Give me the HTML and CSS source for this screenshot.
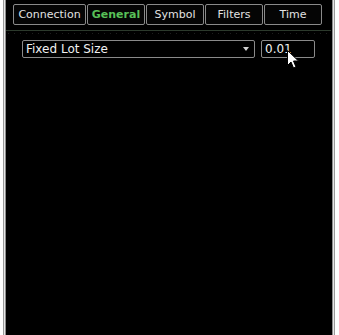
FILE: index.html
```html
<!DOCTYPE html>
<html lang="en">
<head>
    <meta charset="UTF-8">
    <title>Settings</title>
    <link rel="stylesheet" href="styles.css">
</head>
<body>
    <div class="frame">
        <div class="panel">
            <div class="tabs">
                <div class="tab tab-wide">Connection</div>
                <div class="tab active">General</div>
                <div class="tab">Symbol</div>
                <div class="tab">Filters</div>
                <div class="tab">Time</div>
            </div>
            <div class="rule"></div>
            <div class="dots"></div>

            <div class="row">
                <div class="select">
                    <span>Fixed Lot Size</span>
                    <span class="arrow"></span>
                </div>
                <div class="field">
                    <span>0.01</span>
                    <!-- mouse pointer -->
                    <svg class="cursor" width="13" height="20" viewBox="0 0 13 20">
                        <path d="M0.5 0.5 L0.5 15.5 L4 12 L6.5 18 L9 17 L6.5 11 L11.5 11 Z" fill="#fff" stroke="#000" stroke-width="1"/>
                    </svg>
                </div>
            </div>
        </div>
    </div>
</body>
</html>
```

FILE: styles.css
```css
html, body {
    margin: 0;
    height: 100%;
    background: #fff;
}

body {
    font-family: "DejaVu Sans", Verdana, sans-serif;
    font-size: 11px;
    overflow: hidden;
}

.frame {
    height: 100%;
    margin: 0 4px 0 3px;
    border-left: 1px solid #9a9a9a;
    border-right: 1px solid #9a9a9a;
    padding: 0 1px;
    background: #e6e6e6;
}

.panel {
    height: 100%;
    background: #000;
    border-left: 1px solid #8c8c8c;
    border-right: 1px solid #8c8c8c;
    padding-top: 4px;
    box-sizing: border-box;
}

.tabs {
    display: flex;
    padding-left: 7px;
}

.tab {
    width: 58px;
    height: 21px;
    box-sizing: border-box;
    border: 1px solid #8a8a8a;
    border-radius: 2px;
    color: #e2e2e2;
    display: flex;
    align-items: center;
    justify-content: center;
    margin-right: 1px;
    background: #050505;
}

.tab-wide {
    width: 73px;
}

.tab.active {
    color: #58c058;
    font-weight: bold;
}

.rule {
    height: 1px;
    background: #2c3a2c;
    margin: 5px 1px 0 0;
}

.dots {
    height: 1px;
    margin: 2px 2px 0 2px;
    background: repeating-linear-gradient(90deg, #1e1e1e 0 1px, transparent 1px 6px);
}

.row {
    display: flex;
    gap: 6px;
    padding: 6px 0 0 16px;
}

.select {
    height: 16px;
    border: 1px solid #8a8a8a;
    border-radius: 2px;
    color: #f0f0f0;
    font-size: 12px;
    display: flex;
    align-items: center;
    justify-content: space-between;
    padding: 0 4px 0 3px;
    width: 224px;
}

.arrow {
    width: 0;
    height: 0;
    border-left: 3px solid transparent;
    border-right: 3px solid transparent;
    border-top: 4px solid #d0d0d0;
    margin-right: 1px;
}

.field {
    position: relative;
    width: 49px;
    height: 16px;
    border: 1px solid #8a8a8a;
    border-radius: 2px;
    color: #f0f0f0;
    font-size: 12px;
    display: flex;
    align-items: center;
    padding-left: 3px;
}

.cursor {
    position: absolute;
    left: 25px;
    top: 9px;
}
```
